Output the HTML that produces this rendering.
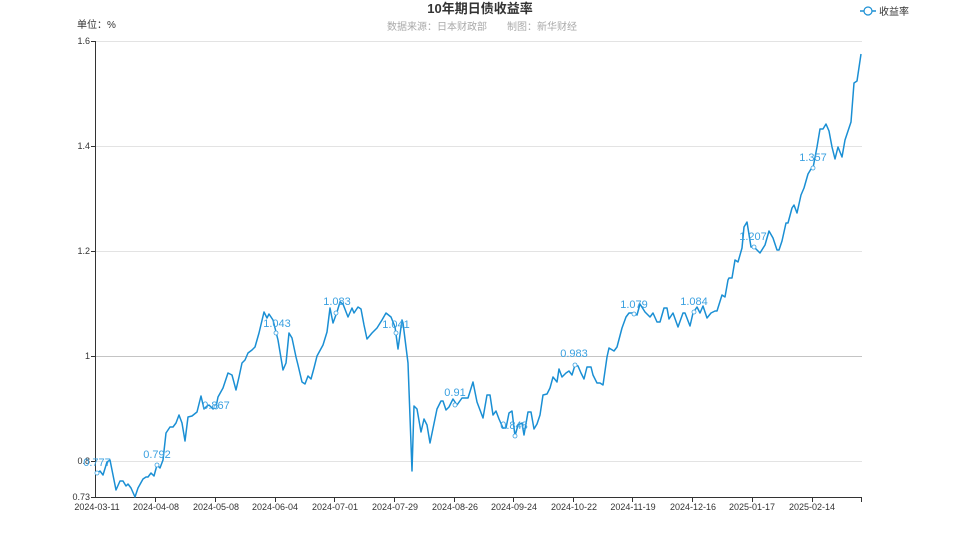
<!DOCTYPE html>
<html><head><meta charset="utf-8"><style>
body{margin:0;background:#fff;width:958px;height:539px;overflow:hidden}
svg{display:block}
text{font-family:"Liberation Sans","Noto Sans CJK SC",sans-serif}
</style></head><body>
<svg width="958" height="539" viewBox="0 0 958 539">
<text x="480" y="13" text-anchor="middle" font-size="13" font-weight="bold" fill="#333">10年期日债收益率</text>
<text x="482" y="30" text-anchor="middle" font-size="10" fill="#aaa">数据来源：日本财政部　　制图：新华财经</text>
<text x="77" y="28" font-size="10" fill="#333">单位：%</text>
<line x1="860" y1="11" x2="876" y2="11" stroke="#1a8fd4" stroke-width="1.5"/>
<circle cx="868" cy="11" r="4" fill="#fff" stroke="#1a8fd4" stroke-width="1.2"/>
<text x="879" y="15" font-size="10" fill="#333">收益率</text>
<g stroke="#e3e3e3" stroke-width="1">
<line x1="95" y1="41.5" x2="862" y2="41.5"/><line x1="95" y1="146.5" x2="862" y2="146.5"/>
<line x1="95" y1="251.5" x2="862" y2="251.5"/><line x1="95" y1="461.5" x2="862" y2="461.5"/>
</g>
<line x1="95" y1="356.5" x2="862" y2="356.5" stroke="#c4c4c4"/>
<line x1="95.5" y1="41" x2="95.5" y2="498" stroke="#333"/>
<line x1="95" y1="497.5" x2="862" y2="497.5" stroke="#333"/>
<g stroke="#333"><line x1="91" y1="41.5" x2="95" y2="41.5"/><line x1="91" y1="146.5" x2="95" y2="146.5"/><line x1="91" y1="251.5" x2="95" y2="251.5"/><line x1="91" y1="356.5" x2="95" y2="356.5"/><line x1="91" y1="461.5" x2="95" y2="461.5"/><line x1="91" y1="497.5" x2="95" y2="497.5"/>
<line x1="155.5" y1="497" x2="155.5" y2="502"/><line x1="215.5" y1="497" x2="215.5" y2="502"/><line x1="275.5" y1="497" x2="275.5" y2="502"/><line x1="334.5" y1="497" x2="334.5" y2="502"/><line x1="394.5" y1="497" x2="394.5" y2="502"/><line x1="454.5" y1="497" x2="454.5" y2="502"/><line x1="513.5" y1="497" x2="513.5" y2="502"/><line x1="573.5" y1="497" x2="573.5" y2="502"/><line x1="632.5" y1="497" x2="632.5" y2="502"/><line x1="692.5" y1="497" x2="692.5" y2="502"/><line x1="752.5" y1="497" x2="752.5" y2="502"/><line x1="812.5" y1="497" x2="812.5" y2="502"/><line x1="861.5" y1="497" x2="861.5" y2="502"/></g>
<g font-size="9" fill="#333" text-anchor="end">
<text x="90" y="44">1.6</text><text x="90" y="149">1.4</text><text x="90" y="254">1.2</text><text x="90" y="359">1</text><text x="90" y="464">0.8</text><text x="90" y="500">0.73</text></g>
<g font-size="9" fill="#333" text-anchor="middle">
<text x="97" y="510">2024-03-11</text><text x="156" y="510">2024-04-08</text><text x="216" y="510">2024-05-08</text><text x="275" y="510">2024-06-04</text><text x="335" y="510">2024-07-01</text><text x="395" y="510">2024-07-29</text><text x="455" y="510">2024-08-26</text><text x="514" y="510">2024-09-24</text><text x="574" y="510">2024-10-22</text><text x="633" y="510">2024-11-19</text><text x="693" y="510">2024-12-16</text><text x="752" y="510">2025-01-17</text><text x="812" y="510">2025-02-14</text></g>
<polyline fill="none" stroke="#1a8fd4" stroke-width="1.5" stroke-linejoin="round" points="95,473 97,473 100,471 103,475 107,462 110,460 116,490 120,481 123,481 126,486 128,484 131,488 135,497 138,488 143,479 146,477 148,477 151,473 154,476 157,465 160,468 163,460 166,433 170,427 173,427 176,423 179,415 182,423 185,441 188,417 192,416 197,412 201,396 204,409 207,406 209,405 213,409 216,407 218,397 223,388 228,373 232,375 236,390 239,377 242,363 245,360 248,353 252,350 255,347 259,333 264,312 267,318 269,314 273,320 278,340 283,370 286,363 289,333 292,338 296,357 298,365 302,382 305,384 308,376 311,379 314,368 317,356 323,345 327,332 330,308 333,323 337,312 340,302 343,304 348,317 352,308 354,313 358,307 361,309 364,325 367,339 372,333 377,328 382,320 386,313 391,317 395,327 398,349 402,320 403,323 408,363 412,471 414,406 417,409 421,432 424,419 427,425 430,443 437,409 441,401 443,401 446,410 449,407 453,399 457,405 462,398 465,398 468,398 473,382 477,402 483,418 487,395 490,395 493,415 496,411 499,419 503,428 506,428 509,413 512,411 515,436 518,425 522,423 524,435 528,412 531,412 534,429 537,424 540,415 543,395 547,394 550,388 553,377 557,382 559,369 562,377 566,373 569,371 572,375 575,365 578,366 581,373 584,379 587,367 591,367 593,375 597,383 600,383 603,385 607,357 609,348 614,351 617,347 622,328 626,317 629,313 633,313 637,315 640,304 645,312 650,317 653,313 657,322 660,322 664,308 667,308 669,319 673,313 678,327 683,313 685,313 690,326 693,313 697,307 700,313 703,306 707,318 711,313 715,311 717,311 722,295 725,297 728,280 729,278 732,278 735,260 738,262 742,248 744,227 747,222 751,247 754,247 760,253 765,245 769,231 773,238 777,250 779,250 782,241 786,223 788,223 792,208 794,205 797,213 801,195 804,188 808,174 811,169 813,168 817,147 820,129 823,129 826,124 829,131 832,147 835,159 838,147 842,157 845,140 851,122 854,83 857,81 861,54"/>
<g fill="#fff" stroke="#3aa0e0" stroke-width="0.8">
<circle cx="97" cy="473" r="2"/><circle cx="157" cy="465" r="2"/><circle cx="216" cy="407" r="2"/><circle cx="276" cy="333" r="2"/><circle cx="336" cy="313" r="2"/><circle cx="396" cy="333" r="2"/><circle cx="455" cy="405" r="2"/><circle cx="515" cy="436" r="2"/><circle cx="575" cy="365" r="2"/><circle cx="634" cy="314" r="2"/><circle cx="694" cy="312" r="2"/><circle cx="754" cy="247" r="2"/><circle cx="813" cy="168" r="2"/></g>
<g font-size="11" fill="#3aa0e0" text-anchor="middle">
<text x="97" y="466">0.777</text><text x="157" y="458">0.792</text><text x="216" y="409">0.867</text><text x="277" y="327">1.043</text><text x="337" y="305">1.083</text><text x="396" y="328">1.041</text><text x="455" y="396">0.91</text><text x="514" y="429">0.848</text><text x="574" y="357">0.983</text><text x="634" y="308">1.079</text><text x="694" y="305">1.084</text><text x="753" y="240">1.207</text><text x="813" y="161">1.357</text></g>
</svg>
</body></html>
